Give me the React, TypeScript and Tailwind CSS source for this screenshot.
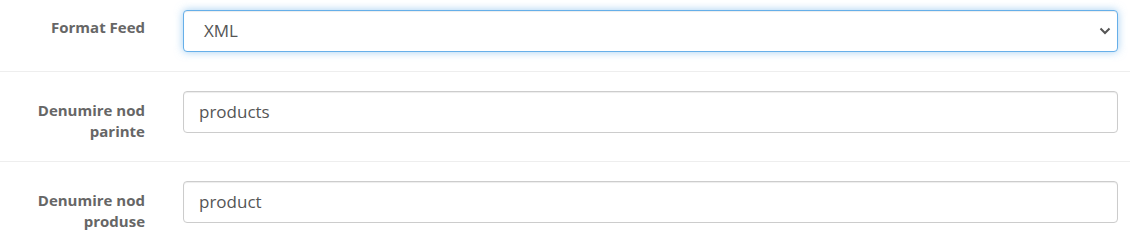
import React from "react";

const font = { fontFamily: '"Open Sans", "Noto Sans", sans-serif' };

function Row({
  label,
  children,
  first,
  last,
}: {
  label: React.ReactNode;
  children: React.ReactNode;
  first?: boolean;
  last?: boolean;
}) {
  return (
    <div
      className={`flex ${first ? "pt-[10px]" : "pt-[19px]"} pb-[19px] ${
        last ? "" : "border-b border-[#eeeeee]"
      }`}
    >
      <div className="w-[183px] shrink-0 pr-[38px] text-right">
        <div
          className={`${first ? "pt-[7px]" : "pt-[9px]"} text-[15px] leading-[21px] font-bold text-[#666666]`}
        >
          {label}
        </div>
      </div>
      <div className="w-[935px] shrink-0">{children}</div>
    </div>
  );
}

export default function App() {
  return (
    <div className="w-[1130px] h-[242px] overflow-hidden bg-white" style={font}>
      <Row first label="Format Feed">
        <div className="relative h-[42px] rounded-[4px] border border-[#66afe9] bg-white shadow-[inset_0_1px_1px_rgba(0,0,0,0.075),0_0_8px_rgba(102,175,233,0.6)]">
          <div className="flex h-full items-center pl-[20px] text-[17px] text-[#555555]">
            XML
          </div>
          <svg
            className="absolute right-[6px] top-[15px]"
            width="12"
            height="10"
            viewBox="0 0 12 10"
          >
            <path
              d="M1.5 2.5 L6 7 L10.5 2.5"
              fill="none"
              stroke="#555555"
              strokeWidth="2"
            />
          </svg>
        </div>
      </Row>
      <Row
        label={
          <>
            Denumire nod
            <br />
            parinte
          </>
        }
      >
        <div className="flex h-[42px] items-center rounded-[4px] border border-[#cccccc] bg-white pl-[15px] text-[17px] text-[#555555] shadow-[inset_0_1px_1px_rgba(0,0,0,0.075)]">
          products
        </div>
      </Row>
      <Row
        last
        label={
          <>
            Denumire nod
            <br />
            produse
          </>
        }
      >
        <div className="flex h-[42px] items-center rounded-[4px] border border-[#cccccc] bg-white pl-[15px] text-[17px] text-[#555555] shadow-[inset_0_1px_1px_rgba(0,0,0,0.075)]">
          product
        </div>
      </Row>
    </div>
  );
}
